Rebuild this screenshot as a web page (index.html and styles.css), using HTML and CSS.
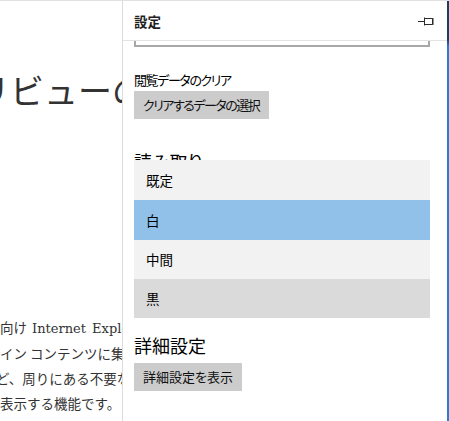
FILE: index.html
```html
<!DOCTYPE html>
<html lang="ja">
<head>
<meta charset="utf-8">
<title>設定</title>
<link rel="stylesheet" href="styles.css">
</head>
<body>
<div class="window">
  <main class="page">
    <h1 class="page-title">リビューの</h1>
    <div class="page-text">
      <p class="line l1">向け <span class="latin">Internet Explorer</span></p>
      <p class="line l2">イン コンテンツに集中</p>
      <p class="line l3">ど、周りにある不要な</p>
      <p class="line l4">表示する機能です。</p>
    </div>
  </main>
  <aside class="panel">
    <header class="panel-header">
      <span class="panel-title">設定</span>
      <svg class="pin" width="17" height="10" viewBox="0 0 17 10" aria-hidden="true">
        <path d="M0 5.5H6M6.5 1.5v8M6.5 2.5H14.5v6H6.5M15 2v7" fill="none" stroke="#2b2b2b" stroke-width="1"/>
      </svg>
    </header>
    <div class="panel-body">
      <div class="field-remnant"></div>
      <div class="label first-label">閲覧データのクリア</div>
      <button class="btn btn1">クリアするデータの選択</button>
      <h2 class="section-title reading">読み取り</h2>
      <div class="label style-label">読み取りビューのスタイル</div>
      <div class="combo">白</div>
      <div class="label font-label">読み取りビューのフォント サイズ</div>
      <div class="combo combo2">中</div>
      <h2 class="section-title advanced">詳細設定</h2>
      <button class="btn btn2">詳細設定を表示</button>

      <ul class="popup">
        <li class="opt">既定</li>
        <li class="opt selected">白</li>
        <li class="opt">中間</li>
        <li class="opt hover">黒</li>
      </ul>
    </div>
  </aside>
  <div class="edge"></div>
</div>
</body>
</html>
```
FILE: styles.css
```css
html, body {
  margin: 0;
  padding: 0;
  background: #ffffff;
}
body {
  width: 449px;
  height: 421px;
  overflow: hidden;
  font-family: "Noto Sans CJK JP", sans-serif;
}
.window {
  display: flex;
  height: 420px;
  border-top: 1px solid #e1e1e1;
}

/* page behind the panel */
.page {
  width: 122px;
  flex: none;
  overflow: hidden;
  color: #333333;
}
.page-title {
  margin: 69px 0 0 -24px;
  font-size: 34px;
  font-weight: normal;
  line-height: 40px;
  white-space: nowrap;
}
.page-text {
  margin-top: 205px;
}
.line {
  margin: 0;
  font-size: 13.5px;
  line-height: 25px;
  white-space: nowrap;
}
.latin {
  font-family: "DejaVu Serif", serif;
  font-size: 13px;
  margin-left: 2px;
  word-spacing: 2px;
}
.l1 { margin-left: 0; }
.l2 { margin-left: 0; }
.l3 { margin-left: -4px; }
.l4 { margin-left: 0; }

/* settings panel */
.panel {
  flex: 1;
  display: flex;
  flex-direction: column;
  border-left: 1px solid #dcdcdc;
  font-feature-settings: "palt";
  color: #000000;
}
.panel-header {
  height: 39px;
  border-bottom: 1px solid #e3e3e3;
  display: flex;
  align-items: center;
  justify-content: space-between;
  padding: 0 12px 0 11px;
}
.panel-title {
  font-size: 13.5px;
  font-weight: bold;
  color: #1f1f1f;
  line-height: 20px;
}
.pin {
  display: block;
  margin-top: 1px;
}
.panel-body {
  position: relative;
  flex: 1;
  padding: 0 17px 0 11px;
}
.field-remnant {
  height: 4px;
  border: 2px solid #a8a8a8;
  border-top: none;
}
.label {
  font-size: 13px;
  line-height: 20px;
}
.first-label {
  margin-top: 23px;
  letter-spacing: -1.4px;
}
.btn {
  display: block;
  margin: 1px 0 0 0;
  height: 28px;
  padding: 0 9px;
  border: none;
  background: #cccccc;
  color: #111111;
  font-family: "Noto Sans CJK JP", sans-serif;
  font-feature-settings: "palt";
  font-size: 13px;
  line-height: 28px;
}
.btn1 {
  letter-spacing: -1.5px;
  padding-right: 10px;
}
.section-title {
  margin: 0;
  font-size: 18px;
  font-weight: normal;
  line-height: 24px;
}
.reading {
  margin-top: 30px;
}
.style-label {
  margin-top: 6px;
}
.combo {
  margin-top: 4px;
  height: 28px;
  border: 2px solid #a8a8a8;
  font-size: 13px;
  line-height: 28px;
  padding-left: 10px;
}
.font-label {
  margin-top: 12px;
}
.combo2 {
  margin-top: 4px;
}
.advanced {
  margin-top: 30px;
}
.btn2 {
  margin-top: 6px;
}

/* open dropdown list over the comboboxes */
.popup {
  position: absolute;
  top: 119px;
  left: 11px;
  right: 17px;
  margin: 0;
  padding: 0;
  list-style: none;
}
.opt {
  height: 40px;
  line-height: 40px;
  padding-left: 12px;
  font-size: 13.5px;
  background: #f2f2f2;
  color: #000000;
}
.opt:nth-child(3),
.opt:nth-child(4) {
  height: 39px;
  line-height: 39px;
}
.opt.selected {
  background: #91c1e8;
}
.opt.hover {
  background: #dadada;
}

.edge {
  width: 2px;
  flex: none;
  background: linear-gradient(#1b3c68 0, #1b3c68 38px, #2c7ad4 46px, #2c7ad4 100%);
}
```
